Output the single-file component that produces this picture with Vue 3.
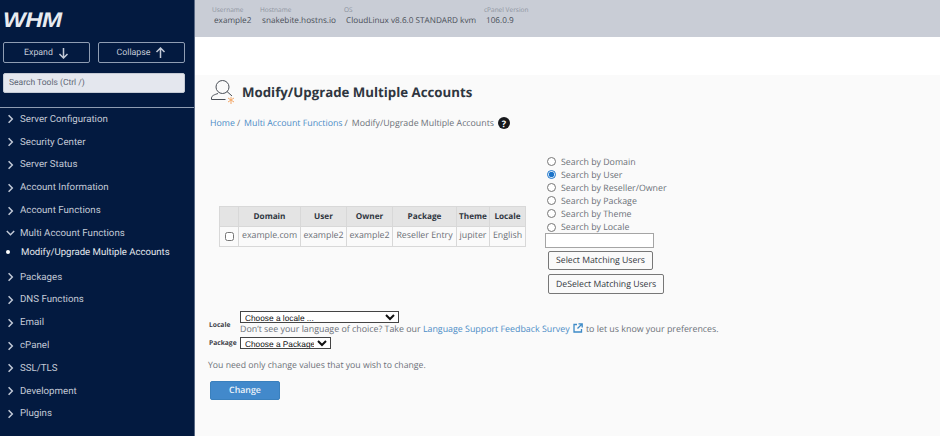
<template>
  <div class="page">
    <aside class="sidebar">
      <div class="logo"><span>WHM</span></div>
      <div class="tree-btns">
        <button class="tree-btn">Expand
          <svg width="11" height="12" viewBox="0 0 11 12"><path d="M5.500 1v10M1.500 7l4 4 4-4" fill="none" stroke="currentColor" stroke-width="1.500" /></svg>
        </button>
        <button class="tree-btn">Collapse
          <svg width="11" height="12" viewBox="0 0 11 12"><path d="M5.500 11V1M1.500 5l4-4 4 4" fill="none" stroke="currentColor" stroke-width="1.500" /></svg>
        </button>
      </div>
      <div class="search-wrap">
        <input class="search" placeholder="Search Tools (Ctrl /)" />
      </div>
      <ul class="menu">
        <template v-for="item in menu" :key="item.name">
          <li class="menu-item">
            <svg class="chev" width="9" height="10" viewBox="0 0 9 10">
              <path v-if="item.open" d="M.8 3l3.700 3.700L8.200 3" fill="none" stroke="currentColor" stroke-width="1.500" />
              <path v-else d="M2.600 1.200l3.700 3.800-3.700 3.800" fill="none" stroke="currentColor" stroke-width="1.500" />
            </svg>
            {{ item.name }}
          </li>
          <li v-if="item.open" class="menu-sub"><span class="dot"></span>Modify/Upgrade Multiple Accounts</li>
        </template>
      </ul>
    </aside>

    <main class="main">
      <div class="topbar">
        <div v-for="info in serverInfo" :key="info.label" class="info" :style="{ width: info.width + 'px' }">
          <div class="info-label">{{ info.label }}</div>
          <div class="info-value">{{ info.value }}</div>
        </div>
      </div>
      <div class="white-strip"></div>

      <div class="content">
        <div class="title-row">
          <svg class="title-icon" width="26" height="26" viewBox="0 0 26 26">
            <circle cx="12.500" cy="9" r="6.500" fill="none" stroke="#4a4f57" stroke-width="1" />
            <path d="M17 13.500l5 4.500" fill="none" stroke="#4a4f57" stroke-width="1" />
            <path d="M8 15.500c-3 1-6.500 2-6.500 4.500v1.500h14" fill="none" stroke="#4a4f57" stroke-width="1" />
            <path d="M18 20l3 2 3-2M21 19v7M18 24l3-2 3 2" fill="none" stroke="#f3a96b" stroke-width="1" />
          </svg>
          <h1>Modify/Upgrade Multiple Accounts</h1>
        </div>
        <div class="crumbs">
          <a>Home</a><span class="sep">/</span>
          <a>Multi Account Functions</a><span class="sep">/</span>
          <span class="current">Modify/Upgrade Multiple Accounts</span>
          <span class="help">?</span>
        </div>

        <div class="picker">
          <table class="accounts">
            <colgroup>
              <col v-for="w in colWidths" :key="w.id" :style="{ width: w.px + 'px' }" />
            </colgroup>
            <thead>
              <tr>
                <th></th>
                <th v-for="col in columns" :key="col">{{ col }}</th>
              </tr>
            </thead>
            <tbody>
              <tr>
                <td><input type="checkbox" /></td>
                <td v-for="(cell, i) in row" :key="i">{{ cell }}</td>
              </tr>
            </tbody>
          </table>

          <div class="search-by">
            <label v-for="opt in searchOptions" :key="opt" class="radio">
              <input type="radio" name="searchby" :checked="opt === 'User'" />
              Search by {{ opt }}
            </label>
            <input class="match-input" type="text" />
            <button class="match-btn">Select Matching Users</button>
            <button class="match-btn second">DeSelect Matching Users</button>
          </div>
        </div>

        <div class="field first">
          <span class="field-label">Locale</span>
          <div>
            <select class="locale-select"><option>Choose a locale ...</option></select>
            <div class="hint">
              Don’t see your language of choice? Take our <a>Language Support Feedback Survey</a>
              <svg width="10" height="10" viewBox="0 0 10 10"><path d="M4 1.500H1v7.500h7.500V6M5.500.800h3.700v3.700M9 1L4.500 5.500" fill="none" stroke="#3d8ac7" stroke-width="1.300" /></svg>
              to let us know your preferences.
            </div>
          </div>
        </div>
        <div class="field">
          <span class="field-label second">Package</span>
          <select class="package-select"><option>Choose a Package</option></select>
        </div>
        <p class="note">You need only change values that you wish to change.</p>
        <button class="change">Change</button>
      </div>
    </main>
  </div>
</template>

<script setup>
const menu = [
  { name: 'Server Configuration' },
  { name: 'Security Center' },
  { name: 'Server Status' },
  { name: 'Account Information' },
  { name: 'Account Functions' },
  { name: 'Multi Account Functions', open: true },
  { name: 'Packages' },
  { name: 'DNS Functions' },
  { name: 'Email' },
  { name: 'cPanel' },
  { name: 'SSL/TLS' },
  { name: 'Development' },
  { name: 'Plugins' }
]

const serverInfo = [
  { label: 'Username', value: 'example2', width: 48 },
  { label: 'Hostname', value: 'snakebite.hostns.io', width: 84 },
  { label: 'OS', value: 'CloudLinux v8.6.0 STANDARD kvm', width: 140 },
  { label: 'cPanel Version', value: '106.0.9', width: 70 }
]

const colWidths = [19, 62, 46, 46, 64, 33, 36].map((px, id) => ({ id, px }))
const columns = ['Domain', 'User', 'Owner', 'Package', 'Theme', 'Locale']
const row = ['example.com', 'example2', 'example2', 'Reseller Entry', 'jupiter', 'English']
const searchOptions = ['Domain', 'User', 'Reseller/Owner', 'Package', 'Theme', 'Locale']
</script>

<style>
html, body {
  margin: 0;
  background: #fafafa;
}
</style>

<style scoped>
.page {
  display: flex;
  width: 940px;
  height: 436px;
  overflow: hidden;
  font-family: "Open Sans", "Liberation Sans", sans-serif;
  text-rendering: geometricPrecision;
}

.sidebar {
  width: 194px;
  height: 436px;
  flex-shrink: 0;
  background: #031a40;
  border-right: 1px solid #5a6a85;
  color: #c3cad7;
  font-family: Roboto, "Liberation Sans", sans-serif;
}

.logo {
  height: 42px;
  padding: 8px 0 0 3px;
  box-sizing: border-box;
  font-family: "Liberation Sans", sans-serif;
  font-style: italic;
  font-weight: 700;
  font-size: 21px;
  line-height: 26px;
  letter-spacing: -0.5px;
  color: #e8ebf0;
}

.logo span {
  display: inline-block;
  transform: scaleX(1.15);
  transform-origin: left center;
}

.tree-btns {
  display: flex;
  gap: 8px;
  padding-left: 3px;
}

.tree-btn {
  display: flex;
  align-items: center;
  justify-content: center;
  gap: 5px;
  width: 87px;
  height: 21px;
  padding: 0;
  background: transparent;
  border: 1px solid #8f9db3;
  border-radius: 2px;
  color: #c3cad7;
  font-family: Roboto, "Liberation Sans", sans-serif;
  font-size: 8.800px;
  text-rendering: geometricPrecision;
}

.search-wrap {
  padding: 10px 0 0 3px;
}

.search {
  display: block;
  width: 182px;
  height: 20px;
  padding: 0 5px;
  box-sizing: border-box;
  border: 1px solid #c4cad4;
  border-radius: 2px;
  background: #e4e7ee;
  font-family: Roboto, "Liberation Sans", sans-serif;
  font-size: 8.500px;
  text-rendering: geometricPrecision;
}

.search::placeholder {
  color: #5d6675;
}

.menu {
  list-style: none;
  margin: 14px 0 0;
  padding: 0;
  border-top: 1px solid #8f9db3;
}

.menu-item {
  display: flex;
  align-items: center;
  height: 22.800px;
  padding-left: 6px;
  font-size: 9.700px;
  white-space: nowrap;
}

.chev {
  margin-right: 5px;
  flex-shrink: 0;
}

.menu-sub {
  display: flex;
  align-items: center;
  height: 15px;
  margin-bottom: 6px;
  padding-left: 6px;
  color: #e4e8ee;
  font-size: 9.600px;
  white-space: nowrap;
}

.dot {
  width: 4px;
  height: 4px;
  margin-right: 11px;
  border-radius: 50%;
  background: #fff;
}

.main {
  flex: 1;
  min-width: 0;
}

.topbar {
  display: flex;
  height: 37px;
  padding: 5px 0 0 17px;
  box-sizing: border-box;
  background: #c9cdd6;
}

.info {
  flex-shrink: 0;
  white-space: nowrap;
}

.info-label {
  font-size: 6.500px;
  line-height: 9px;
  color: #8d939e;
}

.info-value {
  padding: 1px 0 0 2px;
  font-size: 8.200px;
  line-height: 11px;
  color: #4a4f58;
}

.white-strip {
  height: 38px;
  background: #fff;
}

.content {
  height: 361px;
  padding-left: 15px;
  background: #fafafa;
}

.title-row {
  display: flex;
  align-items: center;
  gap: 6px;
  height: 34px;
}

.title-icon {
  flex-shrink: 0;
  margin-top: -2px;
}

h1 {
  margin: 0;
  font-size: 13.250px;
  font-weight: 700;
  color: #2f3640;
}

.crumbs {
  display: flex;
  align-items: center;
  height: 14px;
  margin-top: 7px;
  font-size: 8.800px;
  color: #6b7078;
}

.crumbs a {
  color: #4b8cc6;
}

.sep {
  margin: 0 4px 0 2px;
}

.help {
  display: inline-flex;
  align-items: center;
  justify-content: center;
  width: 12px;
  height: 12px;
  margin-left: 4px;
  border-radius: 50%;
  background: #17191c;
  color: #fff;
  font-size: 9px;
  font-weight: 700;
}

.picker {
  display: flex;
  align-items: flex-start;
  margin-top: 25px;
}

.accounts {
  width: 306px;
  margin: 51px 19px 0 9px;
  border-collapse: collapse;
  table-layout: fixed;
  font-size: 8.800px;
  color: #6b6f76;
  white-space: nowrap;
}

.accounts th,
.accounts td {
  height: 20px;
  padding: 0;
  border: 1px solid #d8d8d8;
  text-align: center;
  box-sizing: border-box;
}

.accounts td {
  padding-bottom: 3px;
}

.accounts th {
  background: #e4e4e4;
  color: #2f3640;
  font-size: 8.200px;
  font-weight: 700;
}

.accounts input {
  display: block;
  width: 9px;
  height: 9px;
  margin: 2px auto 0;
}

.search-by {
  display: flex;
  flex-direction: column;
  align-items: flex-start;
  font-size: 8.800px;
  color: #6b7078;
}

.radio {
  display: flex;
  align-items: center;
  height: 13.100px;
  padding-left: 2px;
  white-space: nowrap;
}

.radio input {
  width: 9px;
  height: 9px;
  margin: 0 5px 0 0;
  accent-color: #1a73c9;
}

.match-input {
  width: 109px;
  height: 15px;
  margin-top: -1px;
  padding: 0;
  box-sizing: border-box;
  border: 1px solid #a5a5a5;
  background: #fff;
}

.match-btn {
  height: 19px;
  margin: 3px 0 0 3px;
  padding: 0 7px;
  border: 1px solid #777;
  border-radius: 2px;
  background: #fafafa;
  color: #33373d;
  font-family: "Open Sans", "Liberation Sans", sans-serif;
  font-size: 8.700px;
  text-rendering: geometricPrecision;
}

.match-btn.second {
  height: 20px;
  margin-top: 4px;
}

.field {
  display: flex;
  align-items: flex-start;
  font-size: 8.850px;
  color: #6b7078;
}

.field.first {
  margin-top: 18px;
}

.field-label {
  width: 31px;
  margin-left: -1px;
  padding-top: 8px;
  font-size: 6.700px;
  font-weight: 700;
  color: #3c4047;
}

.field-label.second {
  padding-top: 2px;
}

.locale-select,
.package-select {
  display: block;
  height: 12px;
  padding: 0;
  box-sizing: border-box;
  border: 1px solid #444;
  border-radius: 0;
  background: #fff;
  color: #111;
  font-family: "Liberation Sans", sans-serif;
  font-size: 8.300px;
  text-rendering: geometricPrecision;
}

.locale-select {
  width: 159px;
  margin-top: -1px;
}

.package-select {
  width: 91px;
  margin-top: 1px;
}

.hint {
  height: 13px;
  line-height: 12px;
  white-space: nowrap;
}

.hint a {
  color: #4b8cc6;
}

.hint svg {
  margin: 0 1px 0 3px;
  vertical-align: -1px;
}

.note {
  margin: 10px 0 0 -2px;
  font-size: 8.700px;
  line-height: 12px;
  color: #6b7078;
}

.change {
  display: block;
  width: 70px;
  height: 19px;
  margin-top: 10px;
  padding: 0;
  border: 1px solid #3a80bd;
  border-radius: 2px;
  background: #4289cb;
  color: #eef4fa;
  font-family: "Open Sans", "Liberation Sans", sans-serif;
  font-size: 8.800px;
  font-weight: 600;
  text-rendering: geometricPrecision;
}
</style>
